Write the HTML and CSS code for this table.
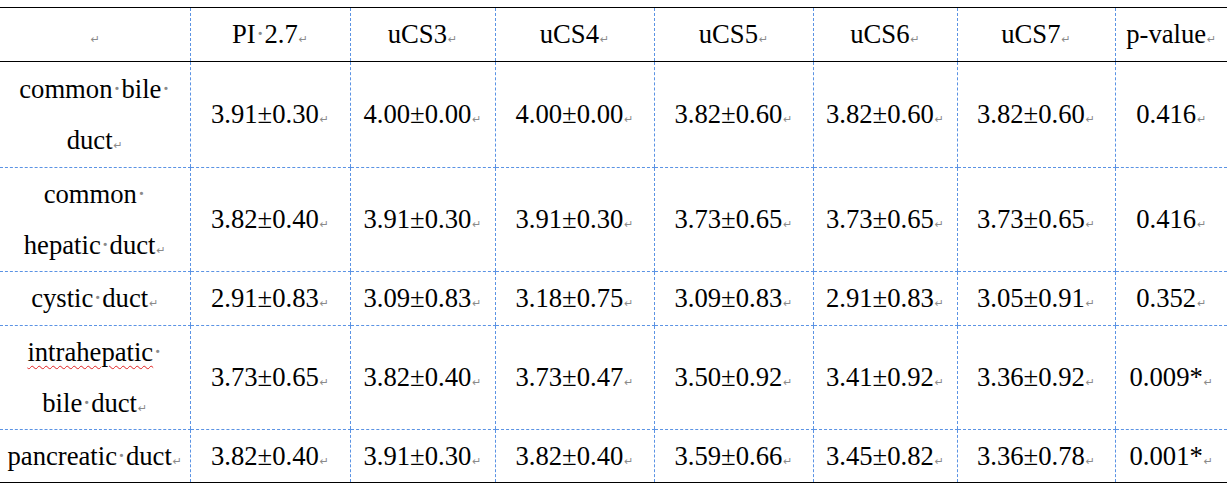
FILE: index.html
```html
<!DOCTYPE html>
<html lang="en">

<head>
    <meta charset="UTF-8">
    <title>Duct scores</title>
    <link rel="stylesheet" href="styles.css">
</head>

<body>
    <table class="scores">
        <colgroup>
            <col class="c1">
            <col class="c2">
            <col class="c3">
            <col class="c4">
            <col class="c5">
            <col class="c6">
            <col class="c7">
            <col class="c8">
        </colgroup>
        <thead>
            <tr class="head">
                <th><span class="pm">↵</span></th>
                <th>PI<span class="sp">·</span>2.7<span class="pm">↵</span></th>
                <th>uCS3<span class="pm">↵</span></th>
                <th>uCS4<span class="pm">↵</span></th>
                <th>uCS5<span class="pm">↵</span></th>
                <th>uCS6<span class="pm">↵</span></th>
                <th>uCS7<span class="pm">↵</span></th>
                <th>p-value<span class="pm">↵</span></th>
            </tr>
        </thead>
        <tbody>
            <tr class="two first">
                <td>common<span class="sp">·</span>bile<span class="sp">·</span><br>duct<span class="pm">↵</span></td>
                <td>3.91±0.30<span class="pm">↵</span></td>
                <td>4.00±0.00<span class="pm">↵</span></td>
                <td>4.00±0.00<span class="pm">↵</span></td>
                <td>3.82±0.60<span class="pm">↵</span></td>
                <td>3.82±0.60<span class="pm">↵</span></td>
                <td>3.82±0.60<span class="pm">↵</span></td>
                <td>0.416<span class="pm">↵</span></td>
            </tr>
            <tr class="two">
                <td>common<span class="sp">·</span><br>hepatic<span class="sp">·</span>duct<span class="pm">↵</span></td>
                <td>3.82±0.40<span class="pm">↵</span></td>
                <td>3.91±0.30<span class="pm">↵</span></td>
                <td>3.91±0.30<span class="pm">↵</span></td>
                <td>3.73±0.65<span class="pm">↵</span></td>
                <td>3.73±0.65<span class="pm">↵</span></td>
                <td>3.73±0.65<span class="pm">↵</span></td>
                <td>0.416<span class="pm">↵</span></td>
            </tr>
            <tr class="one">
                <td>cystic<span class="sp">·</span>duct<span class="pm">↵</span></td>
                <td>2.91±0.83<span class="pm">↵</span></td>
                <td>3.09±0.83<span class="pm">↵</span></td>
                <td>3.18±0.75<span class="pm">↵</span></td>
                <td>3.09±0.83<span class="pm">↵</span></td>
                <td>2.91±0.83<span class="pm">↵</span></td>
                <td>3.05±0.91<span class="pm">↵</span></td>
                <td>0.352<span class="pm">↵</span></td>
            </tr>
            <tr class="two">
                <td><span class="spell">intrahepatic</span><span class="sp">·</span><br>bile<span class="sp">·</span>duct<span class="pm">↵</span></td>
                <td>3.73±0.65<span class="pm">↵</span></td>
                <td>3.82±0.40<span class="pm">↵</span></td>
                <td>3.73±0.47<span class="pm">↵</span></td>
                <td>3.50±0.92<span class="pm">↵</span></td>
                <td>3.41±0.92<span class="pm">↵</span></td>
                <td>3.36±0.92<span class="pm">↵</span></td>
                <td>0.009*<span class="pm">↵</span></td>
            </tr>
            <tr class="one last">
                <td>pancreatic<span class="sp">·</span>duct<span class="pm">↵</span></td>
                <td>3.82±0.40<span class="pm">↵</span></td>
                <td>3.91±0.30<span class="pm">↵</span></td>
                <td>3.82±0.40<span class="pm">↵</span></td>
                <td>3.59±0.66<span class="pm">↵</span></td>
                <td>3.45±0.82<span class="pm">↵</span></td>
                <td>3.36±0.78<span class="pm">↵</span></td>
                <td>0.001*<span class="pm">↵</span></td>
            </tr>
        </tbody>
    </table>
</body>

</html>
```

FILE: styles.css
```css
:root {
    --grid: #5b93e4;
    --rule: #000;
    --mark: #8a8a8a;
    --font: 'Liberation Serif', 'Times New Roman', serif;
}

body {
    margin: 0;
    padding: 7px 0 0;
    background: #fff;
    overflow: hidden;
}

.scores {
    width: 1227px;
    table-layout: fixed;
    border-collapse: collapse;
    font-family: var(--font);
    font-size: 26.67px;
    color: #000;
}

.c1 { width: 190px; }
.c2 { width: 160px; }
.c3 { width: 145px; }
.c4 { width: 159px; }
.c5 { width: 159px; }
.c6 { width: 144px; }
.c7 { width: 158px; }
.c8 { width: 112px; }

th,
td {
    padding: 0;
    text-align: center;
    vertical-align: middle;
    font-weight: normal;
    line-height: 51px;
    white-space: nowrap;
    border-left: 1px dashed var(--grid);
    border-bottom: 1px dashed var(--grid);
}

th:first-child,
td:first-child {
    border-left: none;
}

.head th {
    height: 53px;
    border-top: 1px solid var(--rule);
    border-bottom: 1px solid var(--rule);
}

.two td {
    height: 103px;
}

.first td {
    height: 105px;
}

.one td {
    height: 53px;
}

.last td {
    height: 52px;
    border-bottom: 1px solid var(--rule);
}

.sp {
    color: var(--mark);
}

.pm {
    font-family: 'DejaVu Sans', sans-serif;
    font-size: 11px;
    line-height: 1;
    color: var(--mark);
    margin-left: 1px;
}

.spell {
    text-decoration: underline wavy #e02020;
    text-decoration-thickness: 1px;
    text-underline-offset: 4px;
}
```
